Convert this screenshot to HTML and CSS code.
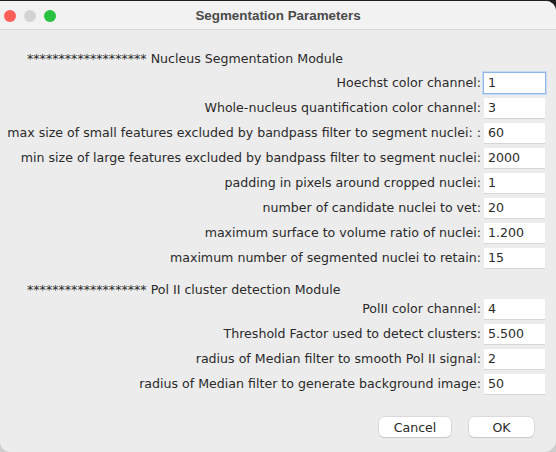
FILE: index.html
```html
<!DOCTYPE html>
<html>
<head>
<meta charset="utf-8">
<link rel="stylesheet" href="styles.css">
</head>
<body>
<div class="window">
  <div class="titlebar">
    <div class="lights">
      <span class="light red"></span>
      <span class="light grey"></span>
      <span class="light green"></span>
    </div>
    <div class="title">Segmentation Parameters</div>
  </div>
  <div class="content">
    <div class="header h1">******************* Nucleus Segmentation Module</div>
    <div class="rows">
      <div class="row"><span class="label">Hoechst color channel:</span><span class="field focused">1</span></div>
      <div class="row"><span class="label">Whole-nucleus quantification color channel:</span><span class="field">3</span></div>
      <div class="row"><span class="label">max size of small features excluded by bandpass filter to segment nuclei: :</span><span class="field">60</span></div>
      <div class="row"><span class="label">min size of large features excluded by bandpass filter to segment nuclei:</span><span class="field">2000</span></div>
      <div class="row"><span class="label">padding in pixels around cropped nuclei:</span><span class="field">1</span></div>
      <div class="row"><span class="label">number of candidate nuclei to vet:</span><span class="field">20</span></div>
      <div class="row"><span class="label">maximum surface to volume ratio of nuclei:</span><span class="field">1.200</span></div>
      <div class="row"><span class="label">maximum number of segmented nuclei to retain:</span><span class="field">15</span></div>
    </div>
    <div class="header h2">******************* Pol II cluster detection Module</div>
    <div class="rows">
      <div class="row"><span class="label">PolII color channel:</span><span class="field">4</span></div>
      <div class="row"><span class="label">Threshold Factor used to detect clusters:</span><span class="field">5.500</span></div>
      <div class="row"><span class="label">radius of Median filter to smooth Pol II signal:</span><span class="field">2</span></div>
      <div class="row"><span class="label">radius of Median filter to generate background image:</span><span class="field">50</span></div>
    </div>
    <div class="buttons">
      <button class="btn cancel">Cancel</button>
      <button class="btn ok">OK</button>
    </div>
  </div>
</div>
</body>
</html>
```
FILE: styles.css
```css
html, body {
  margin: 0;
  padding: 0;
}
body {
  width: 556px;
  height: 452px;
  overflow: hidden;
  background: linear-gradient(#1e1e1e 0, #1e1e1e 30px, #8a8a8a 200px, #cfcfcf 452px);
  font-family: "DejaVu Sans", sans-serif;
}
.window {
  margin-top: 1px;
  height: 451px;
  width: 556px;
  background: #ececec;
  border-radius: 0 10px 12px 10px;
  overflow: hidden;
  display: flex;
  flex-direction: column;
}
.titlebar {
  height: 28px;
  flex: none;
  background: #f2f2f2;
  border-bottom: 1px solid #d9d9d9;
  display: flex;
  align-items: center;
  position: relative;
}
.lights {
  display: flex;
  gap: 8px;
  padding-left: 4px;
  padding-top: 2px;
}
.light {
  width: 12px;
  height: 12px;
  border-radius: 50%;
  display: block;
}
.red { background: #fe5f57; }
.grey { background: #d3d3d3; }
.green { background: #29c240; }
.title {
  position: absolute;
  left: 0;
  right: 0;
  top: 7px;
  text-align: center;
  font-family: "Liberation Sans", sans-serif;
  font-weight: bold;
  font-size: 13.4px;
  color: #4a4a4a;
  line-height: 16px;
}
.content {
  flex: 1;
  display: flex;
  flex-direction: column;
  font-size: 12.6px;
  color: #2a2a2a;
}
.header {
  padding-left: 27px;
  line-height: 16px;
}
.h1 {
  margin-top: 21px;
}
.h2 {
  margin-top: 14px;
}
.rows {
  display: flex;
  flex-direction: column;
  gap: 5px;
}
.h1 + .rows { margin-top: 6px; }
.h2 + .rows { margin-top: 1px; }
.row {
  display: flex;
  justify-content: flex-end;
  align-items: center;
  gap: 3px;
  padding-right: 11px;
  height: 20px;
}
.label {
  white-space: nowrap;
  line-height: 16px;
}
.field {
  width: 56px;
  height: 20px;
  box-sizing: border-box;
  padding-left: 4px;
  background: #ffffff;
  line-height: 20px;
  width: 61px;
  box-shadow: 0 1px 0 #d6d6d6;
}
.field.focused {
  box-shadow: 0 0 0 1px #8fb6e6, 0 0 0 2px #c5daf3;
  line-height: 20px;
}
.buttons {
  display: flex;
  justify-content: flex-end;
  gap: 18px;
  padding-right: 22px;
  margin-top: 23px;
}
.btn {
  font-family: "DejaVu Sans", sans-serif;
  font-size: 12.6px;
  color: #2a2a2a;
  background: #ffffff;
  border: none;
  border-radius: 5px;
  height: 20px;
  padding: 0;
  box-shadow: 0 0 0 0.5px #c8c8c8, 0 1px 1px rgba(0,0,0,0.15);
}
.cancel { width: 72px; }
.ok { width: 65px; }
```
